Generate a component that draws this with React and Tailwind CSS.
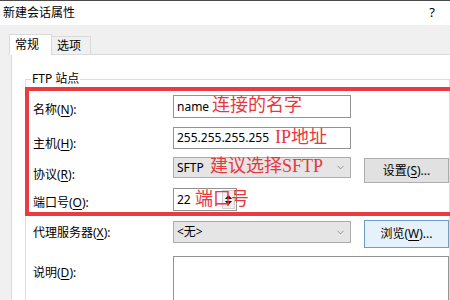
import { ChevronDown } from 'lucide-react';

const ui = "font-['Noto_Sans','Noto_Sans_CJK_SC',sans-serif]";
const note = "font-['Liberation_Serif','Noto_Sans_CJK_SC',serif] text-[#e5383f] leading-none";

const Key = ({ children }) => <span className="underline underline-offset-2">{children}</span>;

const Combo = ({ value, className = '' }) => (
  <div className={`flex items-center justify-between w-[178px] bg-[#e5e5e5] border border-[#adadad] pl-[3px] pr-[4px] ${className}`}>
    <span>{value}</span>
    <ChevronDown size={11} strokeWidth={1.3} className="text-[#606060]" />
  </div>
);

const Button = ({ children, focused }) => (
  <button
    className={`w-[85px] border ${
      focused ? 'h-[28px] bg-[#e5f1fb] border-[#6e9cc4]' : 'h-[25px] bg-[#e1e1e1] border-[#adadad]'
    }`}
  >
    {children}
  </button>
);

export default function App() {
  return (
    <div className={`relative w-[450px] h-[300px] overflow-hidden bg-[#f0f0f0] text-[12px] text-black ${ui}`}>
      {/* title bar */}
      <div className="h-[25px] bg-white border-t border-[#4a4a4a] flex items-center justify-between pl-[3px] pr-[15px]">
        <span>新建会话属性</span>
        <span className="text-[13px]">?</span>
      </div>

      {/* tabs */}
      <div className="h-[29px] flex items-end pl-[9px] relative z-10">
        <div className="w-[43px] h-[21px] bg-white border border-b-0 border-[#d9d9d9] pl-[5px] pt-[1px] -mb-px">常规</div>
        <div className="w-[39px] h-[18px] border border-b-0 border-l-0 border-[#d9d9d9] pl-[5px] leading-[17px]">选项</div>
      </div>

      {/* tab page */}
      <div className="ml-[11px] h-[260px] bg-white border-l border-t border-[#d9d9d9] pl-[13px] pt-[24px]">
        {/* group box: FTP 站点 */}
        <div className="relative border border-[#dcdcdc] h-[300px] pl-[7px] pt-[15px]">
          <span className="absolute left-[5px] -top-[9px] bg-white px-px leading-[16px]">FTP 站点</span>

          <div className="flex items-start h-[32px]">
            <div className="w-[140px] mt-[6px]">名称(<Key>N</Key>):</div>
            <div className="w-[178px] h-[23px] border border-[#939393] pl-[3px] leading-[21px]">name</div>
          </div>

          <div className="flex items-start h-[30px]">
            <div className="w-[140px] mt-[8px]">主机(<Key>H</Key>):</div>
            <div className="w-[178px] h-[22px] border border-[#939393] pl-[3px] leading-[20px]">255.255.255.255</div>
          </div>

          <div className="flex items-start h-[31px]">
            <div className="w-[140px] mt-[9px]">协议(<Key>R</Key>):</div>
            <Combo value="SFTP" className="h-[21px]" />
            <div className="ml-[13px] mt-px">
              <Button>设置(<Key>S</Key>)...</Button>
            </div>
          </div>

          <div className="flex items-start h-[33px]">
            <div className="w-[140px] mt-[6px]">端口号(<Key>O</Key>):</div>
            <div className="w-[64px] h-[23px] border border-[#939393] pl-[3px] flex items-center justify-between pr-px">
              <span>22</span>
              <div className="w-[13px] h-[19px] bg-[#f0f0f0] border border-[#cfcfcf] flex flex-col items-center justify-center gap-[2px]">
                <svg width="7" height="4" viewBox="0 0 7 4"><path d="M0 4 L3.5 0 L7 4 Z" fill="#000" /></svg>
                <svg width="7" height="4" viewBox="0 0 7 4"><path d="M0 0 L3.5 4 L7 0 Z" fill="#000" /></svg>
              </div>
            </div>
          </div>

          <div className="flex items-start h-[35px]">
            <div className="w-[140px] mt-[3px]">代理服务器(<Key>X</Key>):</div>
            <Combo value="<无>" className="h-[22px]" />
            <div className="ml-[13px] -mt-px">
              <Button focused>浏览(<Key>W</Key>)...</Button>
            </div>
          </div>

          <div className="flex items-start">
            <div className="w-[140px] mt-[8px]">说明(<Key>D</Key>):</div>
            <div className="flex-1 h-[80px] border border-[#939393] bg-white" />
          </div>
        </div>
      </div>

      {/* red annotation overlay */}
      <div className="absolute left-[25px] top-[87px] w-[440px] h-[129px] border-[4px] border-[#ea3b40] pointer-events-none" />
      <span className={`absolute left-[212px] top-[96px] text-[18px] ${note}`}>连接的名字</span>
      <span className={`absolute left-[275px] top-[128px] text-[18px] ${note}`}>IP地址</span>
      <span className={`absolute left-[210px] top-[157px] text-[18px] ${note}`}>建议选择SFTP</span>
      <span className={`absolute left-[195px] top-[190px] text-[18px] ${note}`}>端口号</span>
    </div>
  );
}
